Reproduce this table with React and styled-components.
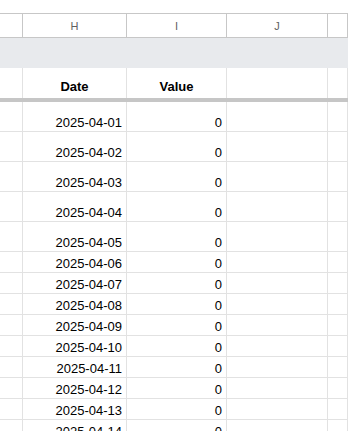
import React from "react";
import styled, { createGlobalStyle } from "styled-components";

const GlobalStyle = createGlobalStyle`
  html, body {
    margin: 0;
    padding: 0;
    background: #ffffff;
    overflow: hidden;
  }
  body {
    font-family: "Liberation Sans", Arial, sans-serif;
  }
`;

const columns = [23, 104, 100, 101, 20];

const Sheet = styled.div`
  display: flex;
  flex-direction: column;
  width: 348px;
  padding-top: 13px;
`;

const HeaderStrip = styled.div`
  display: flex;
  height: 23px;
  border-top: 1px solid #c7c7c7;
  border-bottom: 1px solid #c7c7c7;
`;

const ColumnLetter = styled.div`
  flex: 0 0 ${({ w }) => w}px;
  box-sizing: border-box;
  border-right: 1px solid #c7c7c7;
  display: flex;
  align-items: center;
  justify-content: center;
  font-size: 11px;
  color: #5f5f5f;
`;

const Band = styled.div`
  height: 30px;
  background: #e8eaed;
`;

const Row = styled.div`
  display: flex;
  height: ${({ h }) => h}px;
  box-sizing: border-box;
  border-bottom: ${({ noLine }) => (noLine ? "none" : "1px solid #e2e2e2")};
`;

const Cell = styled.div`
  flex: 0 0 ${({ w }) => w}px;
  box-sizing: border-box;
  border-right: 1px solid #e2e2e2;
  display: flex;
  align-items: flex-end;
  justify-content: ${({ align }) =>
    align === "center" ? "center" : align === "right" ? "flex-end" : "flex-start"};
  padding: 0 4px ${({ pb }) => pb ?? 1}px 4px;
  font-size: 13px;
  line-height: 15px;
  font-weight: ${({ bold }) => (bold ? 700 : 400)};
  color: #000000;
  white-space: nowrap;
  overflow: hidden;
`;

const Separator = styled.div`
  height: 4px;
  background: #c6c6c6;
`;

// the sheet is cut at the window's bottom edge, mid-way through 04-14
const rows = Array.from({ length: 14 }, (_, i) => ({
  date: `2025-04-${String(i + 1).padStart(2, "0")}`,
  value: 0,
  tall: i < 5,
}));

const App = () => {
  return (
    <>
      <GlobalStyle />
      <Sheet>
        <HeaderStrip>
          {["", "H", "I", "J", ""].map((letter, i) => (
            <ColumnLetter key={i} w={columns[i]}>
              {letter}
            </ColumnLetter>
          ))}
        </HeaderStrip>
        <Band />
        <Row h={30} noLine>
          <Cell w={columns[0]} />
          <Cell w={columns[1]} align="center" bold pb={4}>
            Date
          </Cell>
          <Cell w={columns[2]} align="center" bold pb={4}>
            Value
          </Cell>
          <Cell w={columns[3]} />
          <Cell w={columns[4]} />
        </Row>
        <Separator />
        {rows.map((row) => (
          <Row key={row.date} h={row.tall ? 30 : 21}>
            <Cell w={columns[0]} />
            <Cell w={columns[1]} align="right">
              {row.date}
            </Cell>
            <Cell w={columns[2]} align="right">
              {row.value}
            </Cell>
            <Cell w={columns[3]} />
            <Cell w={columns[4]} />
          </Row>
        ))}
      </Sheet>
    </>
  );
};

export default App;
